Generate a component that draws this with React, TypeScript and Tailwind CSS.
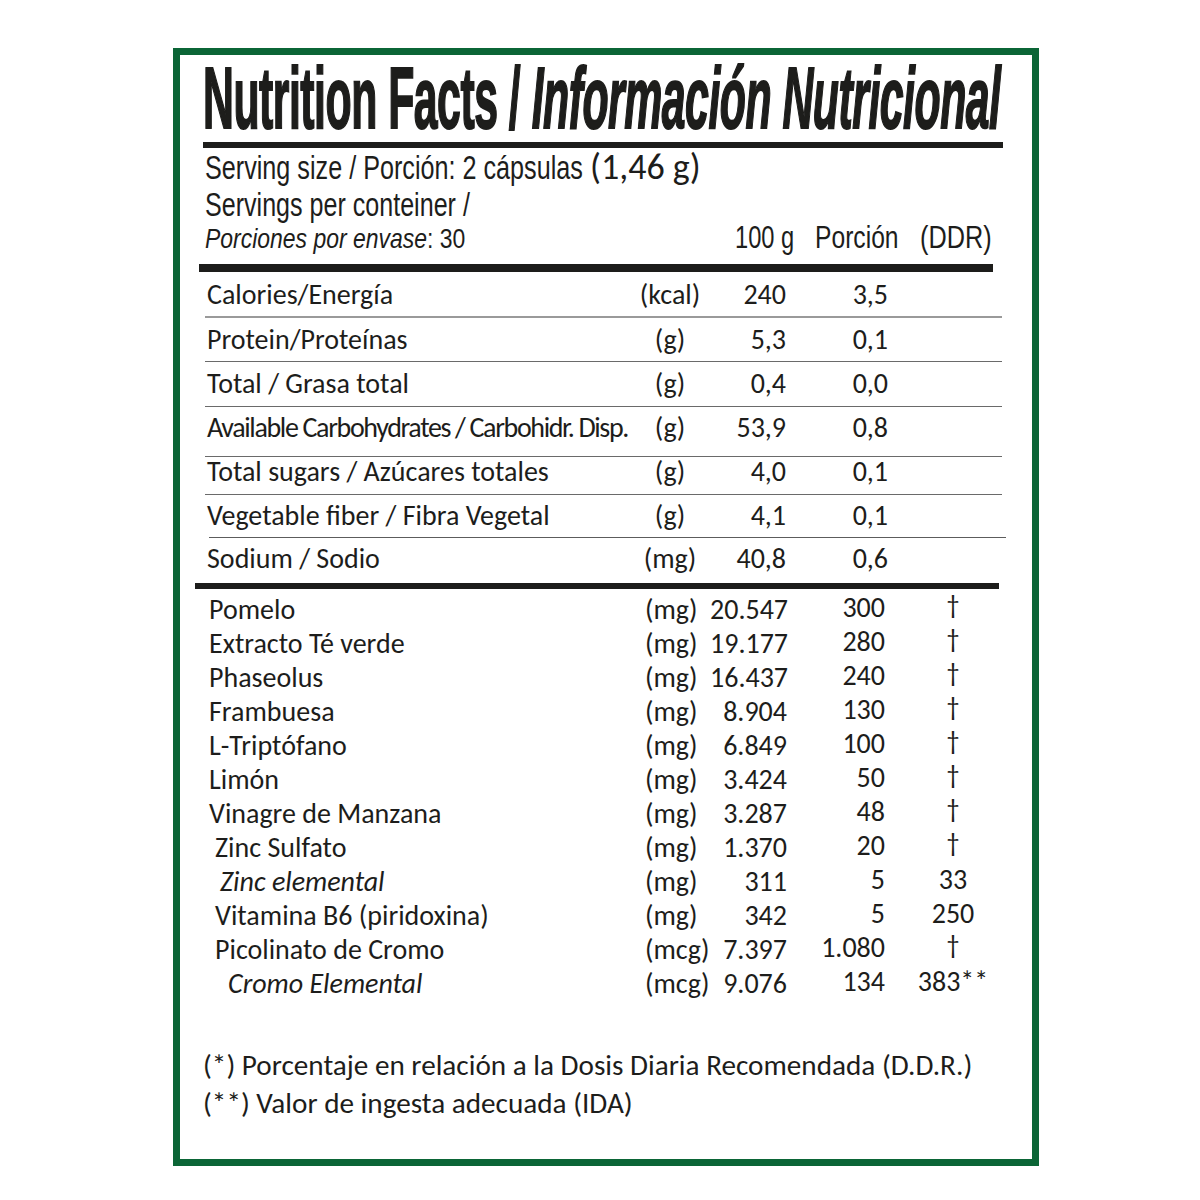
const narrow = "font-['Liberation_Sans',Arial,sans-serif]";
const body = "font-['Carlito','Lato',sans-serif]";

type TopRow = {
  name: string;
  unit: string;
  v100: string;
  porc: string;
  box: string;
  tight?: boolean;
};

const topRows: TopRow[] = [
  { name: "Calories/Energía", unit: "(kcal)", v100: "240", porc: "3,5", box: "h-[44px] pt-[8px]" },
  { name: "Protein/Proteínas", unit: "(g)", v100: "5,3", porc: "0,1", box: "h-[43px] pt-[7px]" },
  { name: "Total / Grasa total", unit: "(g)", v100: "0,4", porc: "0,0", box: "h-[44px] pt-[7px]" },
  {
    name: "Available Carbohydrates / Carbohidr. Disp.",
    unit: "(g)",
    v100: "53,9",
    porc: "0,8",
    box: "h-[49px] pt-[6px]",
    tight: true,
  },
  { name: "Total sugars / Azúcares totales", unit: "(g)", v100: "4,0", porc: "0,1", box: "h-[37px] pt-[0px]" },
  { name: "Vegetable fiber / Fibra Vegetal", unit: "(g)", v100: "4,1", porc: "0,1", box: "h-[42px] pt-[6px]" },
  { name: "Sodium / Sodio", unit: "(mg)", v100: "40,8", porc: "0,6", box: "h-[45px] pt-[6px]" },
];

type Ingredient = {
  name: string;
  indent: string;
  italic?: boolean;
  unit: string;
  v100: string;
  porc: string;
  ddr: string;
};

const ingredients: Ingredient[] = [
  { name: "Pomelo", indent: "pl-[29px]", unit: "(mg)", v100: "20.547", porc: "300", ddr: "†" },
  { name: "Extracto Té verde", indent: "pl-[29px]", unit: "(mg)", v100: "19.177", porc: "280", ddr: "†" },
  { name: "Phaseolus", indent: "pl-[29px]", unit: "(mg)", v100: "16.437", porc: "240", ddr: "†" },
  { name: "Frambuesa", indent: "pl-[29px]", unit: "(mg)", v100: "8.904", porc: "130", ddr: "†" },
  { name: "L-Triptófano", indent: "pl-[29px]", unit: "(mg)", v100: "6.849", porc: "100", ddr: "†" },
  { name: "Limón", indent: "pl-[29px]", unit: "(mg)", v100: "3.424", porc: "50", ddr: "†" },
  { name: "Vinagre de Manzana", indent: "pl-[29px]", unit: "(mg)", v100: "3.287", porc: "48", ddr: "†" },
  { name: "Zinc Sulfato", indent: "pl-[35px]", unit: "(mg)", v100: "1.370", porc: "20", ddr: "†" },
  { name: "Zinc elemental", indent: "pl-[40px]", italic: true, unit: "(mg)", v100: "311", porc: "5", ddr: "33" },
  { name: "Vitamina B6 (piridoxina)", indent: "pl-[35px]", unit: "(mg)", v100: "342", porc: "5", ddr: "250" },
  { name: "Picolinato de Cromo", indent: "pl-[35px]", unit: "(mcg)", v100: "7.397", porc: "1.080", ddr: "†" },
  { name: "Cromo Elemental", indent: "pl-[48px]", italic: true, unit: "(mcg)", v100: "9.076", porc: "134", ddr: "383**" },
];

function Squeeze({
  width,
  scale,
  children,
}: {
  width: string;
  scale: string;
  children: React.ReactNode;
}) {
  // keeps the layout width of a horizontally squashed run of text
  return (
    <span className={`inline-block whitespace-nowrap ${width}`}>
      <span className={`inline-block origin-left ${scale}`}>{children}</span>
    </span>
  );
}

export default function App() {
  return (
    <div className="min-h-[1200px] bg-white pl-[173px] pt-[48px]">
      <div className="box-border h-[1118px] w-[866px] overflow-hidden border-[7px] border-[#0b6536] text-[#1d1d1b]">
        {/* Title */}
        <div className={`flex h-[87px] items-end pl-[23px] ${narrow}`}>
          <Squeeze width="w-[795px]" scale="scale-x-[0.486]">
            <span className="text-[88px] font-bold leading-none tracking-[-1px] [-webkit-text-stroke:2px_#1d1d1b]">
              Nutrition Facts / <span className="italic">Información Nutricional</span>
            </span>
          </Squeeze>
        </div>
        <div className="ml-[23px] h-[6px] w-[800px] bg-[#1d1d1b]" />

        {/* Serving info */}
        <div className="pl-[25px]">
          <div className="flex h-[38px] items-baseline leading-[38px]">
            <Squeeze width="w-[385px]" scale="scale-x-[0.763]">
              <span className={`${narrow} text-[33px]`}>Serving size / Porción: 2 cápsulas</span>
            </Squeeze>
            <span className={`${body} text-[36px]`}>(1,46 g)</span>
          </div>
          <div className="flex h-[38px] items-baseline leading-[38px]">
            <Squeeze width="w-[270px]" scale="scale-x-[0.76]">
              <span className={`${narrow} text-[33px]`}>Servings per conteiner /</span>
            </Squeeze>
          </div>
          <div className={`flex h-[26px] items-baseline leading-[26px] ${narrow}`}>
            <Squeeze width="w-[530px]" scale="scale-x-[0.82]">
              <span className="text-[28px]">
                <span className="italic">Porciones por envase</span>: 30
              </span>
            </Squeeze>
            <Squeeze width="w-[80px]" scale="scale-x-[0.74]">
              <span className="text-[32px]">100 g</span>
            </Squeeze>
            <Squeeze width="w-[105px]" scale="scale-x-[0.77]">
              <span className="text-[32px]">Porción</span>
            </Squeeze>
            <Squeeze width="w-[80px]" scale="scale-x-[0.79]">
              <span className="text-[32px]">(DDR)</span>
            </Squeeze>
          </div>
        </div>
        <div className="ml-[19px] mt-[14px] h-[8px] w-[794px] bg-[#1d1d1b]" />

        {/* Macronutrients */}
        <div className={`${body} text-[28px]`}>
          {topRows.map((r, i) => (
            <div key={r.name}>
              <div className={`flex whitespace-nowrap pl-[27px] leading-[30px] ${r.box}`}>
                <span className={`w-[423px] ${r.tight ? "tracking-[-1.35px]" : ""}`}>{r.name}</span>
                <span className="w-[80px] text-center">{r.unit}</span>
                <span className="w-[76px] text-right">{r.v100}</span>
                <span className="w-[102px] text-right">{r.porc}</span>
              </div>
              {i < topRows.length - 1 && (
                <div
                  className={
                    i === 0
                      ? "ml-[25px] h-[1.5px] w-[797px] bg-[#9a9a9a]"
                      : i === 5
                        ? "ml-[29px] h-px w-[797px] bg-[#5c5c5c]"
                        : "ml-[25px] h-px w-[797px] bg-[#6a6a6a]"
                  }
                />
              )}
            </div>
          ))}
        </div>
        <div className="ml-[15px] h-[6px] w-[804px] bg-[#1d1d1b]" />

        {/* Ingredients */}
        <div className={`${body} pt-[4px] text-[28px]`}>
          {ingredients.map((r) => (
            <div key={r.name} className="flex h-[34px] whitespace-nowrap leading-[34px]">
              <span className={`w-[465px] ${r.indent} ${r.italic ? "italic" : ""}`}>{r.name}</span>
              <span className="w-[65px]">{r.unit}</span>
              <span className="w-[77px] text-right">{r.v100}</span>
              <span className="w-[98px] -translate-y-[2px] text-right">{r.porc}</span>
              <span
                className={`ml-[20px] w-[96px] text-center ${
                  r.ddr === "†" ? "-translate-y-[5px] text-[26px]" : "-translate-y-[2px]"
                }`}
              >
                {r.ddr}
              </span>
            </div>
          ))}
        </div>

        {/* Footnotes */}
        <div className={`${body} mt-[45px] pl-[23px] text-[29.2px] leading-[38px]`}>
          <p>(*) Porcentaje en relación a la Dosis Diaria Recomendada (D.D.R.)</p>
          <p>(**) Valor de ingesta adecuada (IDA)</p>
        </div>
      </div>
    </div>
  );
}
